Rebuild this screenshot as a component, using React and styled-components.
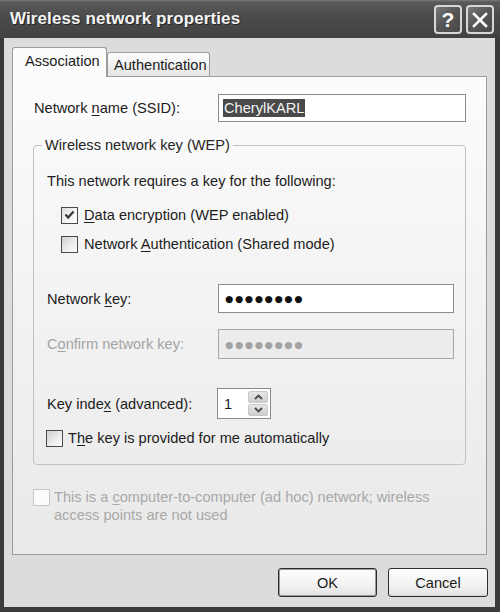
import React from 'react';
import styled, { createGlobalStyle } from 'styled-components';

const Global = createGlobalStyle`
  html, body { margin: 0; padding: 0; background: #3a3a3a; }
  body { font-family: "Liberation Sans", Arial, sans-serif; }
  * { box-sizing: border-box; }
`;

const FONT = `"Liberation Sans", Arial, sans-serif`;
const FS = '14.6px';

const Window = styled.div`
  width: 500px;
  height: 612px;
  display: flex;
  flex-direction: column;
  background: #3b3b3b;
  overflow: hidden;
`;

const TitleBar = styled.div`
  height: 38px;
  flex: none;
  display: flex;
  align-items: center;
  padding: 0 6px 1px 10px;
  background: linear-gradient(#7a7a7a 0px, #5a5a5a 2px, #4c4c4c 40%, #424242 100%);
`;

const Title = styled.div`
  flex: 1;
  color: #f4f4f4;
  font: bold 17px ${FONT};
  letter-spacing: 0.1px;
  text-shadow: 1px 1px 0 #262626;
`;

const CaptionButtons = styled.div`
  display: flex;
  gap: 4px;
  margin-top: 2px;
`;

const CaptionButton = styled.div`
  width: 28px;
  height: 29px;
  border: 2px solid #d6d6d6;
  border-radius: 4px;
  background: linear-gradient(135deg, #777 0%, #555 50%, #484848 100%);
  color: #fff;
  display: flex;
  align-items: center;
  justify-content: center;
  font: bold 21px ${FONT};
`;

const Frame = styled.div`
  flex: 1;
  display: flex;
  flex-direction: column;
  margin: 0 5px 5px 4px;
  padding: 9px 8px 10px 8px;
  background: #dcdcdc;
`;

const TabRow = styled.div`
  height: 29px;
  flex: none;
  display: flex;
  align-items: flex-end;
  position: relative;
  z-index: 1;
`;

const Tab = styled.div`
  width: ${p => p.$w}px;
  height: ${p => (p.$active ? 30 : 24)}px;
  margin-bottom: ${p => (p.$active ? -1 : 0)}px;
  border: 1px solid #9c9c9c;
  border-bottom: none;
  border-radius: 3px 3px 0 0;
  background: ${p => (p.$active ? '#fcfcfc' : 'linear-gradient(#fdfdfd, #e4e4e4)')};
  display: flex;
  align-items: center;
  padding-left: ${p => p.$pl}px;
  padding-bottom: ${p => (p.$active ? 4 : 0)}px;
  font: ${FS} ${FONT};
  color: #1c1c1c;
`;

const Panel = styled.div`
  flex: 1;
  border: 1px solid #9c9c9c;
  background: linear-gradient(#fcfcfc 0%, #f3f3f3 45%, #e9e9e9 100%);
  padding: 17px 20px 0 21px;
  display: flex;
  flex-direction: column;
`;

const FieldRow = styled.div`
  display: grid;
  grid-template-columns: ${p => p.$label}px 1fr;
  align-items: center;
  margin-top: ${p => p.$mt || 0}px;
`;

const Label = styled.span`
  font: ${FS} ${FONT};
  color: ${p => (p.$disabled ? '#a4a4a4' : '#1c1c1c')};
  line-height: 18px;
  white-space: nowrap;
`;

const TextBox = styled.div`
  height: ${p => p.$h}px;
  border: 1.5px solid ${p => (p.$disabled ? '#a8a8a8' : '#8c8c8c')};
  background: ${p => (p.$disabled ? '#ececec' : '#ffffff')};
  display: flex;
  align-items: center;
  padding-left: 4px;
  font: ${FS} ${FONT};
`;

const Selected = styled.span`
  background: #4a4a4a;
  color: #f4f4f4;
  line-height: 18px;
  padding: 0 1px;
`;

const Dots = styled.span`
  font-family: "DejaVu Sans", sans-serif;
  font-size: 9.4px;
  letter-spacing: 1.7px;
  color: ${p => (p.$disabled ? '#a2a2a2' : '#111')};
  padding-left: 2px;
`;

const Group = styled.fieldset`
  margin: 14px 0 0 -1px;
  border: 1px solid #c2c2c2;
  border-radius: 4px;
  padding: 18px 11px 17px 13px;
  min-width: 0;
`;

const Legend = styled.legend`
  font: ${FS} ${FONT};
  line-height: 18px;
  color: #262626;
  padding: 0 3px;
  margin-left: -5px;
`;

const CheckRow = styled.div`
  display: flex;
  align-items: ${p => (p.$top ? 'flex-start' : 'center')};
  gap: ${p => p.$gap || 6}px;
  margin-top: ${p => p.$mt || 0}px;
  margin-left: ${p => p.$ml || 0}px;
  min-height: 18px;
`;

const Box = styled.div`
  width: 17px;
  height: 17px;
  flex: none;
  border: 1.5px solid ${p => (p.$disabled ? '#c6c6c6' : '#4a4a4a')};
  background: ${p =>
    p.$disabled
      ? '#fbfbfb'
      : p.$checked
      ? 'linear-gradient(135deg, #dedede 0%, #f6f6f6 60%, #fff 100%)'
      : 'linear-gradient(135deg, #cfcfcf 0%, #ececec 55%, #fdfdfd 100%)'};
  display: flex;
  align-items: center;
  justify-content: center;
  margin-top: ${p => p.$mtop || 0}px;
`;

const U = styled.span`
  text-decoration: underline;
  text-underline-offset: 2px;
`;

const Spinner = styled.div`
  width: 54px;
  height: 31px;
  border: 1.5px solid #8c8c8c;
  background: #fff;
  display: flex;
  align-items: stretch;
  padding: 2px 2px 2px 0;
`;

const SpinValue = styled.div`
  flex: 1;
  display: flex;
  align-items: center;
  padding-left: 6px;
  font: ${FS} ${FONT};
  color: #1c1c1c;
`;

const SpinButtons = styled.div`
  width: 20px;
  display: flex;
  flex-direction: column;
  gap: 1px;
`;

const SpinButton = styled.div`
  flex: 1;
  border: 1px solid #c8c8c8;
  border-radius: 2px;
  background: linear-gradient(#e6e6e6, #cfcfcf);
  display: flex;
  align-items: center;
  justify-content: center;
`;

const MultiLabel = styled.div`
  font: ${FS} ${FONT};
  line-height: 18px;
  color: #a8a8a8;
`;

const ButtonRow = styled.div`
  flex: none;
  display: flex;
  justify-content: flex-end;
  gap: 11px;
  margin-top: 13px;
  margin-right: -1px;
`;

const Button = styled.div`
  width: ${p => p.$w}px;
  height: 29px;
  border: 1.5px solid #2c2c2c;
  border-radius: 3px;
  background: linear-gradient(#fdfdfd 0%, #f2f2f2 60%, #e2e2e2 100%);
  box-shadow: ${p => (p.$default ? 'inset 0 0 0 1px #9a9a9a' : 'inset 0 -1px 0 #d0d0d0')};
  display: flex;
  align-items: center;
  justify-content: center;
  font: ${FS} ${FONT};
  color: #1c1c1c;
`;

const Check = () => (
  <svg width="11" height="10" viewBox="0 0 11 10">
    <polyline points="1.5,4.5 4.2,7.5 9.5,1.5" fill="none" stroke="#3a3a3a" strokeWidth="2.2" />
  </svg>
);

const CloseGlyph = () => (
  <svg width="16" height="16" viewBox="0 0 16 16">
    <path d="M2 2 L14 14 M14 2 L2 14" stroke="#fff" strokeWidth="2.6" strokeLinecap="square" />
  </svg>
);

const Arrow = ({ up }) => (
  <svg width="9" height="6" viewBox="0 0 9 6">
    <polyline
      points={up ? '1,5 4.5,1.5 8,5' : '1,1 4.5,4.5 8,1'}
      fill="none"
      stroke="#4a4a4a"
      strokeWidth="1.8"
    />
  </svg>
);

export default function App() {
  return (
    <>
      <Global />
      <Window>
        <TitleBar>
          <Title>Wireless network properties</Title>
          <CaptionButtons>
            <CaptionButton>?</CaptionButton>
            <CaptionButton>
              <CloseGlyph />
            </CaptionButton>
          </CaptionButtons>
        </TitleBar>
        <Frame>
          <TabRow>
            <Tab $active $w={95} $pl={12}>Association</Tab>
            <Tab $w={103} $pl={6}>Authentication</Tab>
          </TabRow>
          <Panel>
            <FieldRow $label={184}>
              <Label>
                Network <U>n</U>ame (SSID):
              </Label>
              <TextBox $h={28}>
                <Selected>CherylKARL</Selected>
              </TextBox>
            </FieldRow>

            <Group>
              <Legend>Wireless network key (WEP)</Legend>
              <Label as="div">This network requires a key for the following:</Label>
              <CheckRow $mt={16} $ml={14}>
                <Box $checked>
                  <Check />
                </Box>
                <Label>
                  <U>D</U>ata encryption (WEP enabled)
                </Label>
              </CheckRow>
              <CheckRow $mt={11} $ml={14}>
                <Box />
                <Label>
                  Network <U>A</U>uthentication (Shared mode)
                </Label>
              </CheckRow>

              <FieldRow $label={171} $mt={31}>
                <Label>
                  Network <U>k</U>ey:
                </Label>
                <TextBox $h={29}>
                  <Dots>●●●●●●●●</Dots>
                </TextBox>
              </FieldRow>
              <FieldRow $label={171} $mt={16}>
                <Label $disabled>
                  C<U>o</U>nfirm network key:
                </Label>
                <TextBox $h={30} $disabled>
                  <Dots $disabled>●●●●●●●●</Dots>
                </TextBox>
              </FieldRow>

              <FieldRow $label={170} $mt={29}>
                <Label>
                  Key inde<U>x</U> (advanced):
                </Label>
                <Spinner>
                  <SpinValue>1</SpinValue>
                  <SpinButtons>
                    <SpinButton>
                      <Arrow up />
                    </SpinButton>
                    <SpinButton>
                      <Arrow />
                    </SpinButton>
                  </SpinButtons>
                </Spinner>
              </FieldRow>

              <CheckRow $mt={10} $ml={-1} $gap={5}>
                <Box />
                <Label>
                  T<U>h</U>e key is provided for me automatically
                </Label>
              </CheckRow>
            </Group>

            <CheckRow $top $mt={23} $ml={-1} $gap={4}>
              <Box $disabled $mtop={1} />
              <MultiLabel>
                This is a <U>c</U>omputer-to-computer (ad hoc) network; wireless
                <br />
                access points are not used
              </MultiLabel>
            </CheckRow>
          </Panel>
          <ButtonRow>
            <Button $w={99} $default>OK</Button>
            <Button $w={100}>Cancel</Button>
          </ButtonRow>
        </Frame>
      </Window>
    </>
  );
}
